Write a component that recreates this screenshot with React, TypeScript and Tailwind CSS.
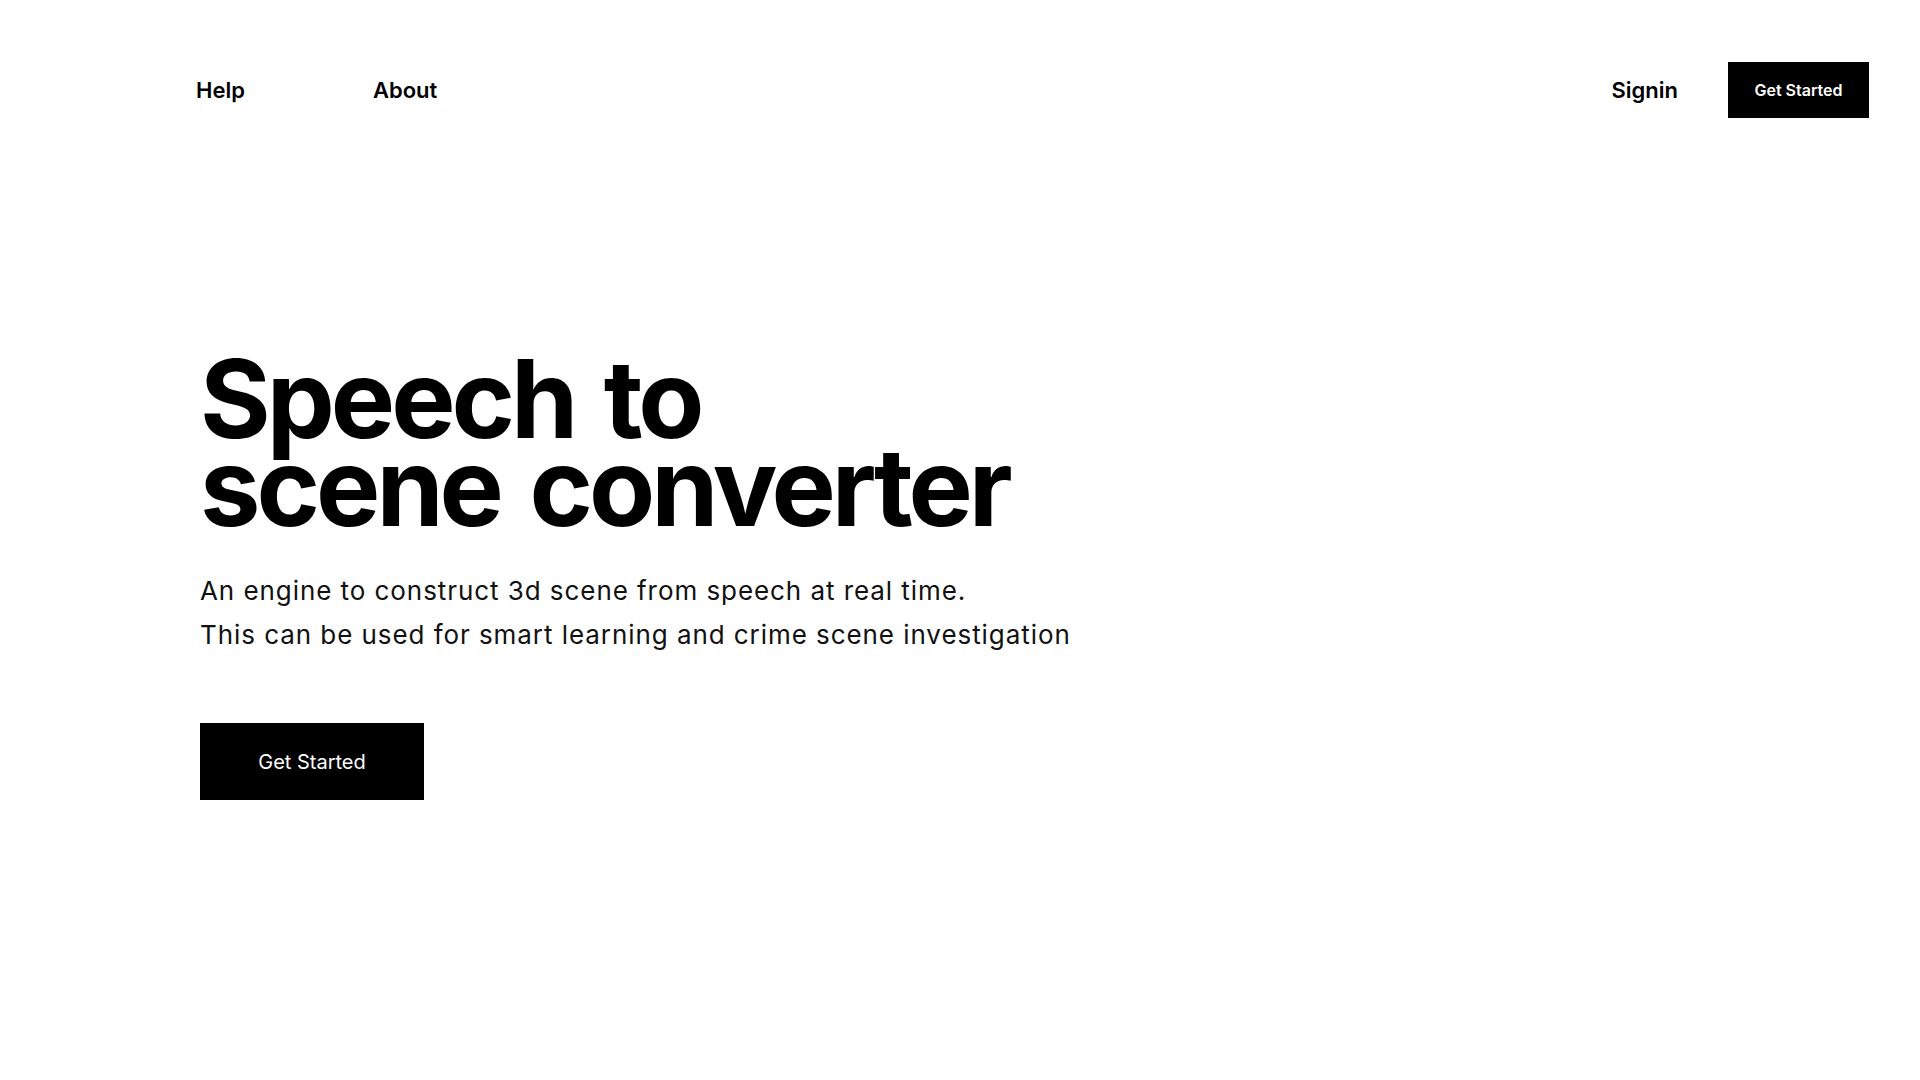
const Navbar = () => {
  return (
    <nav className="flex h-[180px] items-center justify-between pl-[196px] pr-[51px]">
      <div className="flex items-center gap-[128px] text-[22px] font-semibold text-black">
        <a href="#">Help</a>
        <a href="#">About</a>
      </div>
      <div className="flex items-center gap-[50px]">
        <a href="#" className="text-[22px] font-semibold text-black">
          Signin
        </a>
        <button className="h-[56px] w-[141px] bg-black text-[16px] font-semibold text-white">
          Get Started
        </button>
      </div>
    </nav>
  );
};

export default function App() {
  return (
    <div className="min-h-screen bg-white font-['Inter',sans-serif]">
      <Navbar />
      <main className="pl-[200px] pt-[175px]">
        <h1 className="text-[108px] font-bold leading-[88px] tracking-[-0.037em] text-black [word-spacing:8px]">
          Speech to
          <br />
          scene converter
        </h1>
        <div className="mt-[38px] text-[26px] leading-[44px] tracking-[0.036em] text-[#111]">
          <p>An engine to construct 3d scene from speech at real time.</p>
          <p>This can be used for smart learning and crime scene investigation</p>
        </div>
        <button className="mt-[66px] h-[77px] w-[224px] bg-black text-[20px] text-white">
          Get Started
        </button>
      </main>
    </div>
  );
}
